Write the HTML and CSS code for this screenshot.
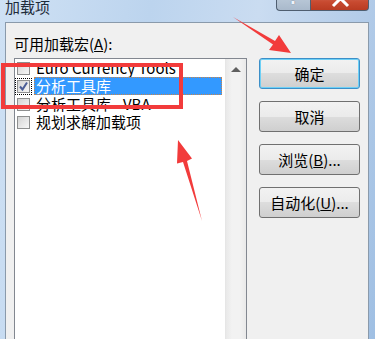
FILE: index.html
```html
<!DOCTYPE html>
<html lang="zh-CN">
  <head>
    <meta charset="UTF-8" />
    <meta name="viewport" content="width=device-width, initial-scale=1.0" />
    <title>加载项</title>
    <link rel="stylesheet" href="styles.css">
  </head>
  <body>
    <div class="titlebar">
      <span class="title">加载项</span>
      <div class="caption">
        <span class="cap help">?</span>
        <span class="cap close">
          <svg width="59" height="21" viewBox="0 0 59 21">
            <path d="M22 16 L29.5 8.5 L37 16" fill="none" stroke="#fff" stroke-width="3" />
          </svg>
        </span>
      </div>
    </div>

    <div class="client">
      <div class="left">
        <div class="label">可用加载宏(<u>A</u>):</div>
        <div class="listbox">
          <ul class="items">
            <li>
              <span class="check"></span>
              <span class="text">Euro Currency Tools</span>
            </li>
            <li class="selected">
              <span class="check focus">
                <svg width="11" height="11" viewBox="0 0 11 11">
                  <path d="M2 5.5 L4.5 8.5 L9 1.5" fill="none" stroke="#4a5d96" stroke-width="2" />
                </svg>
              </span>
              <span class="text">分析工具库</span>
            </li>
            <li>
              <span class="check"></span>
              <span class="text">分析工具库 - VBA</span>
            </li>
            <li>
              <span class="check"></span>
              <span class="text">规划求解加载项</span>
            </li>
          </ul>
          <div class="scrollbar"><span class="arrow-up"></span></div>
        </div>
      </div>

      <div class="buttons">
        <button class="btn default">确定</button>
        <button class="btn">取消</button>
        <button class="btn">浏览(<u>B</u>)...</button>
        <button class="btn">自动化(<u>U</u>)...</button>
      </div>
    </div>

    <!-- annotation drawn over the screenshot -->
    <div class="mark"></div>
    <svg class="arrows" width="375" height="339" viewBox="0 0 375 339">
      <polygon points="233,17 273,44.5 269,50 291,53 279,35 275,41" fill="#f23b3b" />
      <polygon points="202,221 187,161 192,158.5 178,140 177,163.5 183,162" fill="#f23b3b" />
    </svg>
  </body>
</html>
```

FILE: styles.css
```css
body {
  margin: 0;
  height: 339px;
  overflow: hidden;
  position: relative;
  font-family: "Noto Sans CJK SC", "Noto Sans", sans-serif;
  font-size: 15px;
  background: linear-gradient(100deg, #cfe1f4 0%, #bcd4ee 35%, #cadcf1 60%, #b2cbe8 85%, #9fbfe3 100%);
}
.titlebar {
  display: flex;
  height: 22px;
  padding: 0 6px 0 5px;
}
.title {
  line-height: 14px;
  color: #1e2b3a;
}
.caption {
  display: flex;
  margin-left: auto;
  margin-top: -10px;
  height: 21px;
}
.cap {
  height: 21px;
  border: 1px solid #4f5e70;
  border-top: none;
  box-sizing: border-box;
}
.help {
  width: 34px;
  border-radius: 0 0 0 4px;
  border-right: none;
  background: linear-gradient(#c4d2e0, #a9b9cb);
  color: #eef3f8;
  font-family: "DejaVu Sans", sans-serif;
  font-weight: bold;
  font-size: 17px;
  line-height: 17px;
  text-align: center;
  text-shadow: 0 0 1px #5b6b7c;
}
.close {
  width: 59px;
  border-radius: 0 0 4px 0;
  background: linear-gradient(#d9806a, #c84a30 60%, #b93b22);
}
.close svg {
  display: block;
}
.client {
  display: flex;
  margin: 0 6px 0 5px;
  height: 304px;
  padding: 12px 0 0 8px;
  border: 1px solid #8a9aab;
  border-bottom: none;
  background: #f0f0f0;
}
.left {
  display: flex;
  flex-direction: column;
}
.label {
  line-height: 18px;
  color: #000;
}
.listbox {
  display: flex;
  flex: 1;
  width: 233px;
  margin-top: 5px;
  box-sizing: border-box;
  border: 1px solid #828790;
  border-bottom: none;
  background: #fff;
}
.items {
  flex: 1;
  list-style: none;
  margin: 0;
  padding: 0 3px 0 2px;
}
.items li {
  display: flex;
  align-items: center;
  height: 18px;
  line-height: 16px;
}
.check {
  display: flex;
  align-items: center;
  justify-content: center;
  width: 13px;
  height: 13px;
  box-sizing: border-box;
  margin-right: 4px;
  border: 1px solid #8e8f8f;
  background: linear-gradient(135deg, #d4d4d4, #f7f7f7);
}
.check.focus {
  outline: 1px dotted #000;
  outline-offset: 1px;
}
.text {
  flex: 1;
  padding-left: 1px;
  border: 1px solid transparent;
  white-space: nowrap;
  color: #000;
}
.selected .text {
  background: #3399ff;
  color: #fff;
  border: 1px dotted #c8844a;
}
.scrollbar {
  width: 20px;
  border-left: 1px solid #e6e6e6;
  background: linear-gradient(90deg, #e9e9e9, #f2f2f2 30%, #f2f2f2 70%, #e9e9e9);
  display: flex;
  justify-content: center;
}
.arrow-up {
  margin-top: 8px;
  width: 0;
  height: 0;
  border-left: 5px solid transparent;
  border-right: 5px solid transparent;
  border-bottom: 5px solid #606060;
}
.buttons {
  display: flex;
  flex-direction: column;
  gap: 12px;
  margin: 23px 0 0 12px;
}
.btn {
  width: 101px;
  height: 31px;
  padding: 0;
  border: 1px solid #707070;
  border-radius: 3px;
  background: linear-gradient(#f2f2f2 0%, #ebebeb 50%, #dddddd 50%, #cfcfcf 100%);
  font-family: "Noto Sans CJK SC", "Noto Sans", sans-serif;
  font-size: 15px;
  color: #000;
}
.btn.default {
  border-color: #3c8fc8;
  box-shadow: inset 0 0 0 1px #6dd0f6;
}
.mark {
  position: absolute;
  left: 1px;
  top: 63px;
  width: 174px;
  height: 38px;
  border: 4px solid #f23b3b;
}
.arrows {
  position: absolute;
  left: 0;
  top: 0;
}
```
